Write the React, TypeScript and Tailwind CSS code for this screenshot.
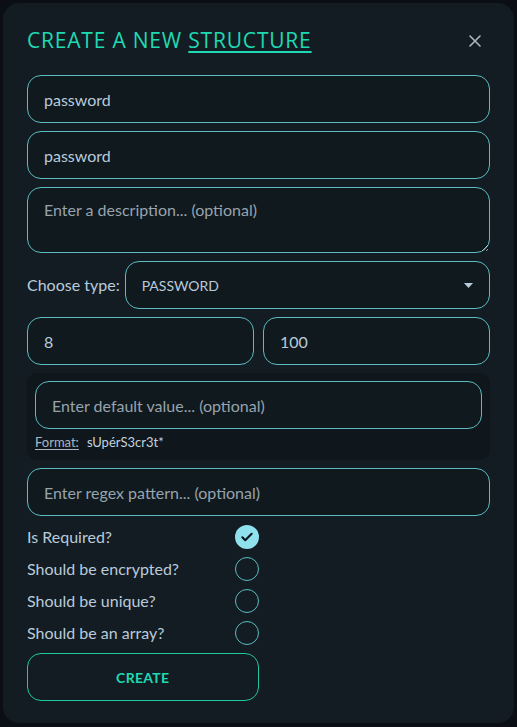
import { useState } from 'react';

const field =
  'h-12 w-full rounded-[14px] border-[1.5px] border-[#5cbcc2] bg-[#10191e] px-4 text-[16px] text-[#b9cbdb] placeholder:text-[#97a3ad] outline-none';

const options = [
  { label: 'Is Required?', checked: true },
  { label: 'Should be encrypted?', checked: false },
  { label: 'Should be unique?', checked: false },
  { label: 'Should be an array?', checked: false },
];

function Check({ checked }: { checked: boolean }) {
  if (checked) {
    return (
      <span className="flex h-6 w-6 items-center justify-center rounded-full bg-[#8fe1ee]">
        <svg width="14" height="14" viewBox="0 0 24 24" fill="none">
          <path d="M4 12.5l5 5L20 6.5" stroke="#0e1418" strokeWidth="3.6" strokeLinecap="round" strokeLinejoin="round" />
        </svg>
      </span>
    );
  }
  return <span className="h-6 w-6 rounded-full border-[1.5px] border-[#5cbcc2]" />;
}

export default function App() {
  const [name, setName] = useState('password');
  const [label, setLabel] = useState('password');

  return (
    <div className="min-h-[727px] w-full bg-[#0b0e15] p-[3px]" style={{ fontFamily: 'Lato, "Open Sans", sans-serif' }}>
      <div className="w-full rounded-[16px] bg-[#131c22] px-6 pb-[22px] pt-6">
        {/* Header */}
        <div className="mb-5 flex h-7 items-center justify-between">
          <h1
            className="text-[21px] font-normal tracking-[0.8px] text-[#1fd9b2]"
            style={{ fontFamily: '"Open Sans", sans-serif' }}
          >
            CREATE A NEW <span className="underline decoration-[1.5px] underline-offset-[3px]">STRUCTURE</span>
          </h1>
          <button className="mr-[9px] text-[#aab6c3]">
            <svg width="12" height="12" viewBox="0 0 12 12" fill="none">
              <path d="M1 1l10 10M11 1L1 11" stroke="currentColor" strokeWidth="1.6" strokeLinecap="round" />
            </svg>
          </button>
        </div>

        <div className="flex flex-col gap-2">
          <input className={field} value={name} onChange={(e) => setName(e.target.value)} />
          <input className={field} value={label} onChange={(e) => setLabel(e.target.value)} />
          <textarea
            className="h-[66px] w-full resize-y rounded-[14px] border-[1.5px] border-[#5cbcc2] bg-[#10191e] px-4 pt-[10px] text-[16px] text-[#b9cbdb] placeholder:text-[#97a3ad] outline-none"
            placeholder="Enter a description... (optional)"
          />

          <div className="flex items-center gap-[5px]">
            <span className="text-[16px] text-[#b9cbdb]">Choose type:</span>
            <div className="flex h-12 flex-1 items-center justify-between rounded-[14px] border-[1.5px] border-[#5cbcc2] bg-[#10191e] pl-4 pr-4">
              <span className="text-[14px] text-[#b9cbdb]">PASSWORD</span>
              <svg width="9" height="5" viewBox="0 0 9 5">
                <path d="M0 0h9L4.5 5z" fill="#b9cbdb" />
              </svg>
            </div>
          </div>

          <div className="grid grid-cols-2 gap-[9px]">
            <input className={field} defaultValue="8" />
            <input className={field} defaultValue="100" />
          </div>

          <div className="rounded-[10px] bg-[#0f171c] px-2 pb-[9px] pt-2">
            <input className={`${field} bg-[#0d161b]`} placeholder="Enter default value... (optional)" />
            <div className="mt-[4px] flex items-center gap-2 text-[13px] leading-[18px]">
              <span className="text-[#aab6c2] underline underline-offset-2">Format:</span>
              <span className="text-[#c4d2de]">sUpérS3cr3t*</span>
            </div>
          </div>

          <input className={field} placeholder="Enter regex pattern... (optional)" />

          <div className="flex w-1/2 flex-col gap-2 pt-px">
            {options.map((o) => (
              <label key={o.label} className="flex h-6 items-center justify-between">
                <span className="text-[16px] text-[#b9cbdb]">{o.label}</span>
                <Check checked={o.checked} />
              </label>
            ))}
          </div>

          <button className="h-12 w-1/2 rounded-[14px] border-[1.5px] border-[#1fc8a3] bg-transparent text-[14px] font-bold tracking-[0.3px] text-[#1fd9b2]">
            CREATE
          </button>
        </div>
      </div>
    </div>
  );
}
